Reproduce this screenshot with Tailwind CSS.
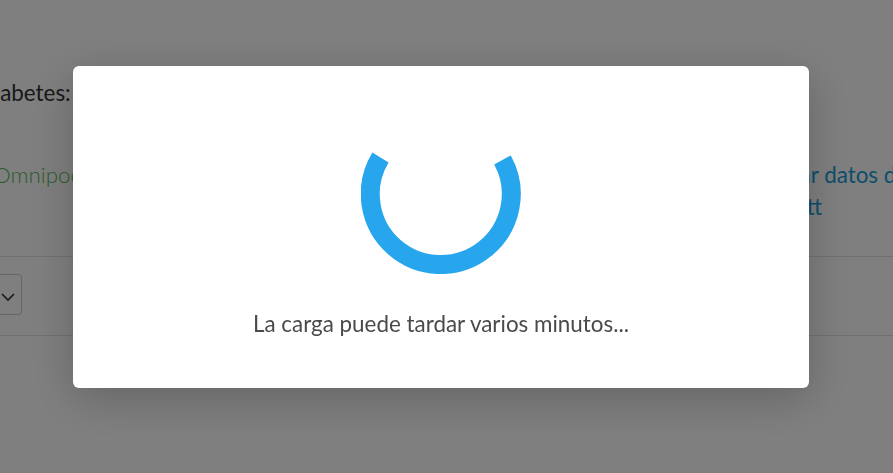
<!DOCTYPE html>
<html lang="es">
<head>
  <meta charset="UTF-8">
  <title>Carga</title>
  <script src="https://cdn.jsdelivr.net/npm/@tailwindcss/browser@4"></script>
</head>
<body class="bg-white overflow-hidden font-['Lato',sans-serif]">
  <!-- page behind the overlay, runs off both sides of the window -->
  <div class="h-[473px] overflow-hidden">
    <div class="w-[893px] pt-[78px]">
      <p class="-ml-[22px] text-[22.4px] leading-[30px] text-[#333]">Diabetes:</p>
      <div class="flex justify-between mt-[51px] h-[97px]">
        <span class="-ml-[101px] text-[22.4px] leading-[32px] font-light text-[#5cb85c] whitespace-nowrap">Conectar Omnipod</span>
        <div class="w-[139px] shrink-0 text-[22.4px] leading-[32px] text-[#1a9dd9] whitespace-nowrap">
          <p>Cargar datos de</p>
          <p>Abbott</p>
        </div>
      </div>
      <div class="border-t border-[#e0e0e0] h-[79px] flex items-center">
        <div class="w-[22px] h-[41px] mt-[-3px] border border-l-0 border-[#ccc] rounded-r-[4px] flex items-center pl-[1px]">
          <svg width="14" height="8" viewBox="0 0 14 8" class="mt-[5px]" fill="none" stroke="#333" stroke-width="1.7"><path d="M1 1l6 6 6-6"/></svg>
        </div>
      </div>
      <div class="border-t border-[#e0e0e0]"></div>
    </div>
  </div>

  <!-- loading modal -->
  <div class="fixed inset-0 bg-black/50">
    <div class="mt-[66px] ml-[73px] w-[736px] h-[322px] bg-white rounded-[6px] shadow-[0_10px_45px_rgba(0,0,0,0.22)] flex flex-col items-center">
      <svg width="160" height="160" viewBox="0 0 160 160" class="mt-[48px]" fill="none" stroke="#27a6ed" stroke-width="19">
        <path d="M19.5 43.5A70.5 70.5 0 1 0 141.5 46"/>
      </svg>
      <p class="mt-[34px] text-[22.4px] leading-[32px] text-[#4a4a4a]">La carga puede tardar varios minutos...</p>
    </div>
  </div>
</body>
</html>
